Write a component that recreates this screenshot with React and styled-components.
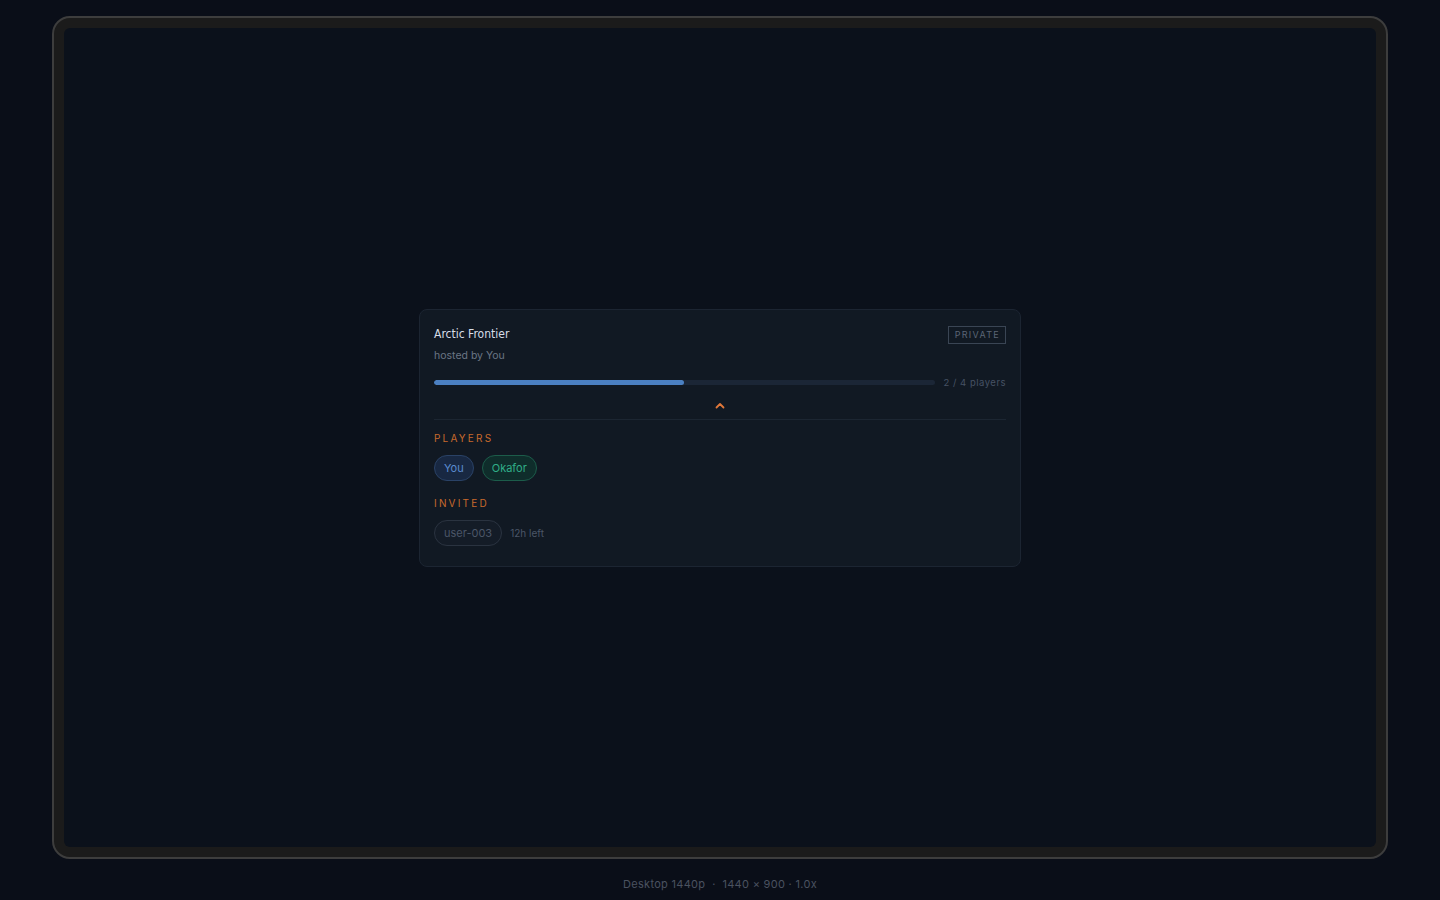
import styled, { createGlobalStyle } from 'styled-components';

const GlobalStyle = createGlobalStyle`
  html, body {
    margin: 0;
    background: #0a0e18;
    font-family: Inter, "Noto Sans", sans-serif;
  }
`

function App() {
  const players = [
    { name: 'You', tone: 'blue' },
    { name: 'Okafor', tone: 'green' },
  ]
  const filled = 2
  const total = 4

  return (
    <Page>
      <GlobalStyle />
      <Frame>
        <Screen>
          <Card>
            <Header>
              <div>
                <Title>Arctic Frontier</Title>
                <Host>hosted by You</Host>
              </div>
              <Badge>PRIVATE</Badge>
            </Header>

            <ProgressRow>
              <Track>
                <Fill style={{ width: `${(filled / total) * 100}%` }} />
              </Track>
              <Count>{filled} / {total} players</Count>
            </ProgressRow>

            <Toggle>
              <svg width="10" height="7" viewBox="0 0 10 7" fill="none">
                <path d="M1.5 5.5 L5 2 L8.5 5.5" stroke="#e0773a" strokeWidth="1.8" strokeLinecap="round" strokeLinejoin="round" />
              </svg>
            </Toggle>

            <Section>
              <Label>PLAYERS</Label>
              <Chips>
                {players.map(p => <Chip key={p.name} $tone={p.tone}>{p.name}</Chip>)}
              </Chips>
            </Section>

            <Section>
              <Label>INVITED</Label>
              <Chips>
                <Chip $tone="muted">user-003</Chip>
                <Expiry>12h left</Expiry>
              </Chips>
            </Section>
          </Card>
        </Screen>
      </Frame>
      <Caption>Desktop 1440p &nbsp;·&nbsp; 1440 × 900 · 1.0x</Caption>
    </Page>
  );
}

export default App;

const Page = styled.div`
  display: flex;
  flex-direction: column;
  align-items: center;
  padding-top: 16px;
  height: 900px;
  box-sizing: border-box;
`

const Frame = styled.div`
  width: 1336px;
  height: 843px;
  box-sizing: border-box;
  border: 2px solid #3d3d3d;
  border-radius: 18px;
  background: #1b1b1b;
  padding: 10px;
`

const Screen = styled.div`
  height: 100%;
  border-radius: 6px;
  background: #0b111b;
  display: flex;
  align-items: center;
  justify-content: center;
`

const Card = styled.div`
  width: 602px;
  box-sizing: border-box;
  background: #111923;
  border: 1px solid #1c2532;
  border-radius: 8px;
  padding: 15px 14px 20px;
`

const Header = styled.div`
  display: flex;
  justify-content: space-between;
  align-items: flex-start;
`

const Title = styled.div`
  font-family: "DejaVu Sans Condensed", "DejaVu Sans", sans-serif;
  font-stretch: condensed;
  font-size: 12px;
  line-height: 18px;
  color: #d6dde6;
`

const Host = styled.div`
  margin-top: 6px;
  font-size: 10.5px;
  line-height: 14px;
  color: #6b7685;
`

const Badge = styled.div`
  margin-top: 1px;
  border: 1px solid #3a4554;
  padding: 2px 5px 2px 6px;
  font-size: 9px;
  line-height: 12px;
  letter-spacing: 1.3px;
  color: #5b6676;
`

const ProgressRow = styled.div`
  display: flex;
  align-items: center;
  gap: 9px;
  margin-top: 14px;
`

const Track = styled.div`
  flex: 1;
  height: 5px;
  border-radius: 3px;
  background: #1b2636;
  overflow: hidden;
`

const Fill = styled.div`
  height: 100%;
  background: #4b80c2;
  border-radius: 3px;
`

const Count = styled.div`
  font-size: 9.5px;
  letter-spacing: 0.5px;
  color: #465264;
`

const Toggle = styled.div`
  display: flex;
  justify-content: center;
  padding: 14px 0 10px;
  border-bottom: 1px solid #1c2632;
`

const Section = styled.div`
  margin-top: 11px;

  & + & {
    margin-top: 15px;
  }
`

const Label = styled.div`
  font-size: 10px;
  line-height: 14px;
  letter-spacing: 2.2px;
  color: #c9692c;
  margin-bottom: 10px;
`

const tones = {
  blue: { bg: '#182842', border: '#2a4266', color: '#5a8bd0' },
  green: { bg: '#0f2d2b', border: '#1c5c4a', color: '#2fae88' },
  muted: { bg: '#141c27', border: '#2a3340', color: '#4b5667' },
}

const Chips = styled.div`
  display: flex;
  align-items: center;
  gap: 8px;
`

const Chip = styled.div`
  height: 26px;
  box-sizing: border-box;
  padding: 0 9px;
  display: flex;
  align-items: center;
  border-radius: 13px;
  font-size: 11px;
  background: ${p => tones[p.$tone].bg};
  border: 1px solid ${p => tones[p.$tone].border};
  color: ${p => tones[p.$tone].color};
`

const Expiry = styled.span`
  font-size: 10px;
  color: #4b5667;
`

const Caption = styled.div`
  margin-top: 18px;
  font-size: 11px;
  line-height: 14px;
  color: #4a5260;
  letter-spacing: 0.3px;
`
